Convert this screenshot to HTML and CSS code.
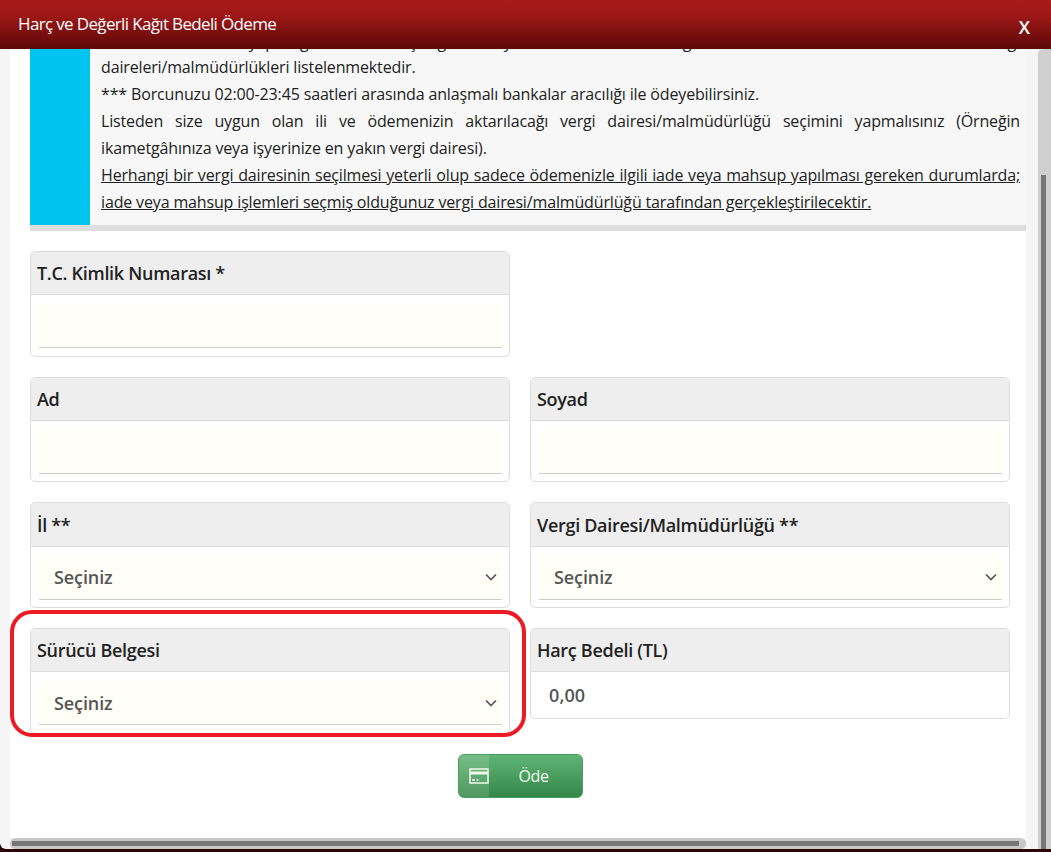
FILE: index.html
```html
<!DOCTYPE html>
<html lang="tr">
<head>
    <meta charset="UTF-8">
    <meta name="viewport" content="width=device-width, initial-scale=1.0">
    <title>Harç ve Değerli Kağıt Bedeli Ödeme</title>
    <link rel="stylesheet" href="styles.css">
</head>
<body>
    <div class="modal">
        <header class="modal-header">
            <h1 class="modal-title">Harç ve Değerli Kağıt Bedeli Ödeme</h1>
            <button class="modal-close" type="button">X</button>
        </header>

        <div class="modal-main">
            <div class="modal-view">
                <div class="modal-body">
                    <div class="modal-content">
                        <div class="info-box">
                            <div class="info-mark"></div>
                            <div class="info-text">
                                <p class="full-line first-line">** Ödemenizi yapacağınız il seçildiğinde yalnızca o ile bağlı olan ve ödeme alabilen vergi</p>
                                <p>daireleri/malmüdürlükleri listelenmektedir.</p>
                                <p>*** Borcunuzu 02:00-23:45 saatleri arasında anlaşmalı bankalar aracılığı ile ödeyebilirsiniz.</p>
                                <p class="full-line">Listeden size uygun olan ili ve ödemenizin aktarılacağı vergi dairesi/malmüdürlüğü seçimini yapmalısınız (Örneğin</p>
                                <p>ikametgâhınıza veya işyerinize en yakın vergi dairesi).</p>
                                <p class="full-line underline">Herhangi bir vergi dairesinin seçilmesi yeterli olup sadece ödemenizle ilgili iade veya mahsup yapılması gereken durumlarda;</p>
                                <p class="underline">iade veya mahsup işlemleri seçmiş olduğunuz vergi dairesi/malmüdürlüğü tarafından gerçekleştirilecektir.</p>
                            </div>
                        </div>

                        <form class="form-grid">
                            <div class="card">
                                <label class="card-label" for="tckn">T.C. Kimlik Numarası *</label>
                                <div class="card-field"><input class="field" id="tckn" type="text"></div>
                            </div>
                            <div></div>

                            <div class="card">
                                <label class="card-label" for="ad">Ad</label>
                                <div class="card-field"><input class="field" id="ad" type="text"></div>
                            </div>
                            <div class="card">
                                <label class="card-label" for="soyad">Soyad</label>
                                <div class="card-field"><input class="field" id="soyad" type="text"></div>
                            </div>

                            <div class="card">
                                <label class="card-label" for="il">İl **</label>
                                <div class="card-field">
                                    <select class="field field-select" id="il"><option>Seçiniz</option></select>
                                </div>
                            </div>
                            <div class="card">
                                <label class="card-label" for="vd">Vergi Dairesi/Malmüdürlüğü **</label>
                                <div class="card-field">
                                    <select class="field field-select" id="vd"><option>Seçiniz</option></select>
                                </div>
                            </div>

                            <div class="card highlighted">
                                <label class="card-label" for="belge">Sürücü Belgesi</label>
                                <div class="card-field">
                                    <select class="field field-select" id="belge"><option>Seçiniz</option></select>
                                </div>
                            </div>
                            <div class="card card-top">
                                <div class="card-label">Harç Bedeli (TL)</div>
                                <div class="card-value">0,00</div>
                            </div>
                        </form>

                        <div class="actions">
                            <button class="pay-button" type="button">
                                <span class="pay-icon">
                                    <svg width="20" height="16" viewBox="0 0 20 16" fill="none" stroke="#f2f7ea">
                                        <rect x="1" y="1" width="18" height="14" stroke-width="1.5"/>
                                        <rect x="1" y="3.5" width="18" height="3" fill="#f2f7ea" stroke="none"/>
                                        <path d="M3 12h3M7.5 12h2" stroke-width="1.5"/>
                                    </svg>
                                </span>
                                <span class="pay-text">Öde</span>
                            </button>
                        </div>
                    </div>
                </div>
                <div class="hbar"><div class="hbar-thumb"></div></div>
            </div>
            <div class="vbar"><div class="vbar-thumb"></div></div>
        </div>
    </div>
</body>
</html>
```

FILE: styles.css
```css
* {
    box-sizing: border-box;
}

html, body {
    height: 100%;
}

body {
    margin: 0;
    overflow: hidden;
    background-color: #2e0505;
    font-family: "Open Sans", "Noto Sans", sans-serif;
    color: #222;
}

.modal {
    display: flex;
    flex-direction: column;
    height: 852px;
    padding-bottom: 3px;
}

.modal-header {
    position: relative;
    z-index: 1;
    display: flex;
    align-items: center;
    justify-content: space-between;
    flex-shrink: 0;
    height: 49px;
    padding: 0 21px 0 18px;
    background: linear-gradient(to bottom, #a81a1a 0%, #a01818 30%, #5b0808 100%);
    color: #fff;
}

.modal-title {
    margin: 0 0 2px;
    font-size: 17px;
    font-weight: 400;
    letter-spacing: -0.65px;
}

.modal-close {
    margin-top: 5px;
    padding: 0;
    border: none;
    background: transparent;
    color: #fff;
    font-family: inherit;
    font-size: 18px;
    font-weight: 600;
    cursor: pointer;
}

.modal-main {
    display: flex;
    flex: 1;
    min-height: 0;
    background-color: #f5f5f5;
    border-bottom-left-radius: 6px;
}

.modal-view {
    display: flex;
    flex-direction: column;
    flex: 1;
    min-width: 0;
    padding-left: 10px;
    padding-right: 12px;
}

.modal-body {
    flex: 1;
    min-height: 0;
    overflow: hidden;
    background-color: #fff;
}

/* body is scrolled a little, the first line sits under the header */
.modal-content {
    margin-top: -23px;
    padding: 0 0 0 20px;
}

.hbar {
    flex-shrink: 0;
    height: 11px;
    padding: 3px 7px 3px 2px;
    background-color: #c8c8c8;
    border-radius: 6px;
}

.hbar-thumb {
    height: 5px;
    background-color: #777;
}

.vbar {
    flex-shrink: 0;
    width: 13px;
    padding: 126px 5px 0 3px;
    background-color: #cfcfcf;
    border-top-left-radius: 5px;
}

.vbar-thumb {
    height: 100%;
    background-color: #777;
}

.info-box {
    display: flex;
    border-bottom: 6px solid #ddd;
    background-color: #f7f7f7;
}

.info-mark {
    flex-shrink: 0;
    width: 60px;
    background-color: #00c4f0;
}

.info-text {
    flex: 1;
    min-width: 0;
    padding: 1px 6px 9px 11px;
    font-size: 16px;
    line-height: 27px;
    letter-spacing: -0.15px;
    color: #222;
}

.info-text p {
    margin: 0;
}

.info-text .first-line {
    margin: 2px 0 -2px;
}

.info-text .full-line {
    text-align: justify;
    text-align-last: justify;
}

.underline {
    text-decoration: underline;
}

.form-grid {
    display: grid;
    grid-template-columns: 480px 480px;
    gap: 20px;
    margin-top: 20px;
}

.card {
    border: 1px solid #ddd;
    border-radius: 5px;
    background-color: #fff;
}

.card-top {
    align-self: start;
}

.card-label {
    display: flex;
    align-items: center;
    height: 43.4px;
    padding: 0 6px;
    background-color: #eee;
    border-bottom: 1px solid #ddd;
    border-radius: 4px 4px 0 0;
    font-size: 18px;
    font-weight: 600;
    letter-spacing: -0.3px;
    color: #222;
}

.card-field {
    padding: 9px 7px 7.3px 8px;
}

.field {
    display: block;
    width: 100%;
    height: 44px;
    padding: 0 15px;
    border: none;
    border-bottom: 1px solid #ccc;
    border-radius: 0;
    outline: none;
    background-color: #fffef7;
    font-family: inherit;
    font-size: 18px;
    font-weight: 600;
    letter-spacing: -0.1px;
    color: #555;
}

.field-select {
    appearance: none;
    background-image: url("data:image/svg+xml,%3Csvg xmlns='http://www.w3.org/2000/svg' width='12' height='8' viewBox='0 0 12 8'%3E%3Cpath d='M1 1.5l5 5 5-5' fill='none' stroke='%23555' stroke-width='1.7'/%3E%3C/svg%3E");
    background-repeat: no-repeat;
    background-position: right 5px center;
}

.card-value {
    display: flex;
    align-items: center;
    height: 46px;
    padding: 0 18px;
    font-size: 18px;
    font-weight: 600;
    letter-spacing: 0.1px;
    color: #555;
}

/* red marker drawn on the screenshot */
.highlighted {
    position: relative;
}

.highlighted::after {
    content: "";
    position: absolute;
    top: -19px;
    left: -21px;
    right: -17px;
    bottom: -4px;
    border: 4px solid #ed1c24;
    border-radius: 22px;
    pointer-events: none;
}

.actions {
    display: flex;
    justify-content: center;
    margin-top: 20px;
    padding-right: 15px;
}

.pay-button {
    display: flex;
    width: 125px;
    height: 44px;
    padding: 0;
    overflow: hidden;
    border: 1px solid #4c9c5f;
    border-radius: 6px;
    background: linear-gradient(to bottom, #5fb475 0%, #348748 100%);
    color: #f0fbee;
    font-family: inherit;
    cursor: pointer;
}

.pay-icon {
    display: flex;
    align-items: center;
    justify-content: flex-end;
    flex-shrink: 0;
    width: 30px;
    background-color: rgba(255, 255, 255, 0.14);
}

.pay-text {
    flex: 1;
    align-self: center;
    padding-right: 4px;
    font-size: 16px;
    letter-spacing: -0.4px;
}
```
